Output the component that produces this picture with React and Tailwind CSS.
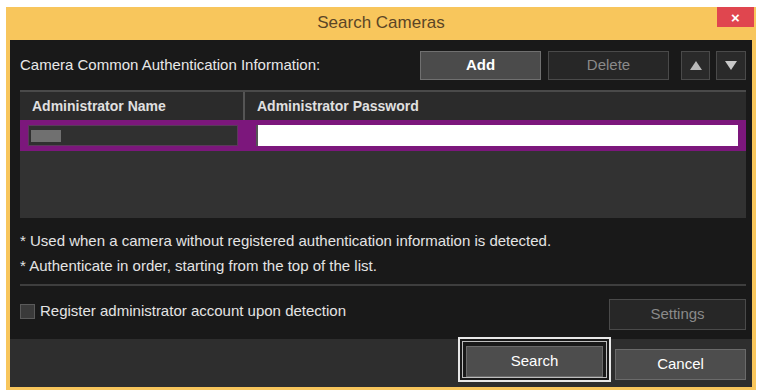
import React from 'react';

const font = { fontFamily: '"Liberation Sans", Arial, sans-serif' };

const Btn = ({ children, className = '' }) => (
  <div className={`flex items-center justify-center border text-[15px] ${className}`}>{children}</div>
);

export default function App() {
  return (
    <div className="w-[759px] h-[392px] bg-white pt-[7px] pl-[6px]" style={font}>
      <div className="w-[750px] h-[383px] bg-[#f8c65c] flex flex-col px-[4px] pb-[3px]">
        <div className="h-[33px] shrink-0 flex items-start relative">
          <div className="flex-1 text-center text-[17px] text-[#5b4526] pt-[3px]">Search Cameras</div>
          <div className="absolute right-[-2px] top-0 w-[37px] h-[20px] bg-[#e0464f] flex items-center justify-center text-white text-[15px] font-bold leading-none">
            ×
          </div>
        </div>
        <div className="flex-1 bg-[#191919] flex flex-col">
          <div className="flex flex-col pl-[10px] pr-[6px] pt-[11px]">
            <div className="flex items-center h-[29px]">
              <div className="flex-1 text-[15px] text-[#e8e8e8]">Camera Common Authentication Information:</div>
              <Btn className="w-[121px] h-[29px] bg-[#4b4b4b] border-[#707070] text-white font-bold">Add</Btn>
              <Btn className="w-[121px] h-[29px] ml-[7px] bg-[#272727] border-[#4a4a4a] text-[#8a8a8a]">Delete</Btn>
              <Btn className="w-[29px] h-[29px] ml-[12px] bg-[#2a2a2a] border-[#4a4a4a]">
                <svg width="12" height="9" viewBox="0 0 12 9"><path d="M6 0 L12 9 L0 9 Z" fill="#b8b8b8" /></svg>
              </Btn>
              <Btn className="w-[30px] h-[29px] ml-[6px] bg-[#2a2a2a] border-[#4a4a4a]">
                <svg width="12" height="9" viewBox="0 0 12 9"><path d="M0 0 L12 0 L6 9 Z" fill="#c8c8c8" /></svg>
              </Btn>
            </div>
            <div className="mt-[10px] h-[128px] bg-[#323232] border-t-[2px] border-[#4a4a4a] flex flex-col">
              <div className="h-[28px] flex items-center bg-[#2b2b2b] text-[14px] font-bold text-[#e0e0e0]">
                <div className="w-[225px] pl-[12px] border-r-[2px] border-[#555] h-full flex items-center">Administrator Name</div>
                <div className="pl-[12px]">Administrator Password</div>
              </div>
              <div className="h-[31px] bg-[#7c177c] flex items-center px-[8px] py-[5px]">
                <div className="w-[210px] h-[21px] bg-[#303030] border border-[#5a3a5a] flex items-center pl-[2px]">
                  <div className="w-[30px] h-[12px] bg-[#707070]" />
                </div>
                <div className="ml-[18px] flex-1 h-[21px] bg-white border-l-[2px] border-[#555]" />
              </div>
            </div>
            <div className="mt-[10px] text-[15px] text-[#e4e4e4] leading-[25px]">
              <div>* Used when a camera without registered authentication information is detected.</div>
              <div>* Authenticate in order, starting from the top of the list.</div>
            </div>
            <div className="mt-[6px] h-[2px] bg-[#3e3e3e]" />
            <div className="flex items-center mt-[13px] h-[31px]">
              <div className="w-[15px] h-[15px] bg-[#3a3a3a] border border-[#5a5a5a] mt-[-6px]" />
              <div className="flex-1 ml-[5px] text-[15px] text-[#e4e4e4] mt-[-6px]">Register administrator account upon detection</div>
              <Btn className="w-[137px] h-[31px] bg-[#272727] border-[#4a4a4a] text-[#8a8a8a]">Settings</Btn>
            </div>
          </div>
          <div className="flex-1 mt-[9px] bg-[#2e2e2e] flex justify-end items-start pr-[6px]">
            <div className="w-[153px] h-[45px] border-[2px] border-[#e8e8e8] mt-[-2px] bg-[#191919]">
              <div className="w-full h-full border-[2px] border-[#191919] flex items-end">
                <div className="w-full h-full border border-[#bdbdbd] flex items-end pl-[3px] pb-[0px]">
                  <Btn className="w-[137px] h-[31px] bg-[#4d4d4d] border-[#6a6a6a] text-white">Search</Btn>
                </div>
              </div>
            </div>
            <Btn className="w-[131px] h-[31px] ml-[4px] mt-[10px] bg-[#4d4d4d] border-[#6a6a6a] text-white">Cancel</Btn>
          </div>
        </div>
      </div>
    </div>
  );
}
